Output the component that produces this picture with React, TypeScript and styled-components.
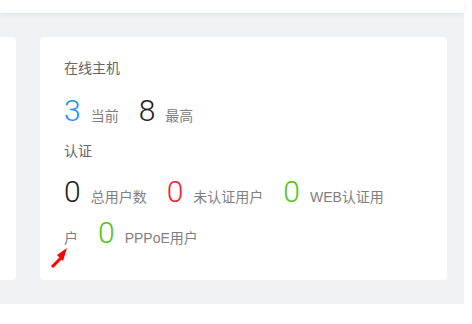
import React from "react";
import styled, { createGlobalStyle } from "styled-components";

interface Stat {
  value: number;
  label: string;
  color: string;
}

const GlobalStyle = createGlobalStyle`
  html, body {
    margin: 0;
    padding: 0;
    background: #ffffff;
  }
  body {
    font-family: "Liberation Sans", "Noto Sans CJK SC", sans-serif;
  }
`;

const Header = styled.div`
  height: 13px;
  width: 464px;
  background: #ffffff;
  box-shadow: 0 1px 4px rgba(0, 21, 41, 0.08);
  position: relative;
  z-index: 1;
`;

const Main = styled.div`
  width: 464px;
  height: 291px;
  box-sizing: border-box;
  padding: 24px 17px 24px 0;
  background: #f0f2f5;
  display: flex;
  gap: 24px;
`;

const SideCard = styled.div`
  width: 16px;
  background: #ffffff;
  border-radius: 0 4px 4px 0;
`;

const Card = styled.div`
  flex: 1;
  position: relative;
  background: #ffffff;
  border-radius: 4px;
  padding: 21px 56px 0 24px;
`;

const Title = styled.div<{ $gap?: number }>`
  margin-top: ${(p) => p.$gap ?? 0}px;
  font-size: 14px;
  line-height: 20px;
  color: #666666;
`;

const StatRow = styled.div<{ $gap: number }>`
  margin-top: ${(p) => p.$gap}px;
  line-height: 41px;
  font-size: 14px;
  color: #808080;
`;

const Num = styled.span<{ $color: string }>`
  font-family: Roboto, "Liberation Sans", sans-serif;
  font-weight: 300;
  font-size: 30px;
  line-height: 30px;
  color: ${(p) => p.$color};
  margin-right: 10px;
`;

const Label = styled.span`
  margin-right: 20px;
`;

const Arrow = styled.svg`
  position: absolute;
  left: 10px;
  top: 209px;
`;

const hosts: Stat[] = [
  { value: 3, label: "当前", color: "#1890ff" },
  { value: 8, label: "最高", color: "#222222" },
];

const auth: Stat[] = [
  { value: 0, label: "总用户数", color: "#222222" },
  { value: 0, label: "未认证用户", color: "#f5222d" },
  { value: 0, label: "WEB认证用户", color: "#52c41a" },
  { value: 0, label: "PPPoE用户", color: "#52c41a" },
];

const renderStats = (items: Stat[]) =>
  items.map((s) => (
    <React.Fragment key={s.label}>
      <Num $color={s.color}>{s.value}</Num>
      <Label>{s.label}</Label>
    </React.Fragment>
  ));

const App: React.FC = () => {
  return (
    <>
      <GlobalStyle />
      <Header />
      <Main>
        <SideCard />
        <Card>
          <Title>在线主机</Title>
          <StatRow $gap={18}>{renderStats(hosts)}</StatRow>
          <Title $gap={4}>认证</Title>
          <StatRow $gap={16}>{renderStats(auth)}</StatRow>
          {/* red annotation arrow */}
          <Arrow width="20" height="22" viewBox="0 0 20 22">
            <path d="M2 21 L12 11" stroke="#ff0000" strokeWidth="3" />
            <polygon points="17,2 7,9 13,15" fill="#ff0000" />
          </Arrow>
        </Card>
      </Main>
    </>
  );
};

export default App;
